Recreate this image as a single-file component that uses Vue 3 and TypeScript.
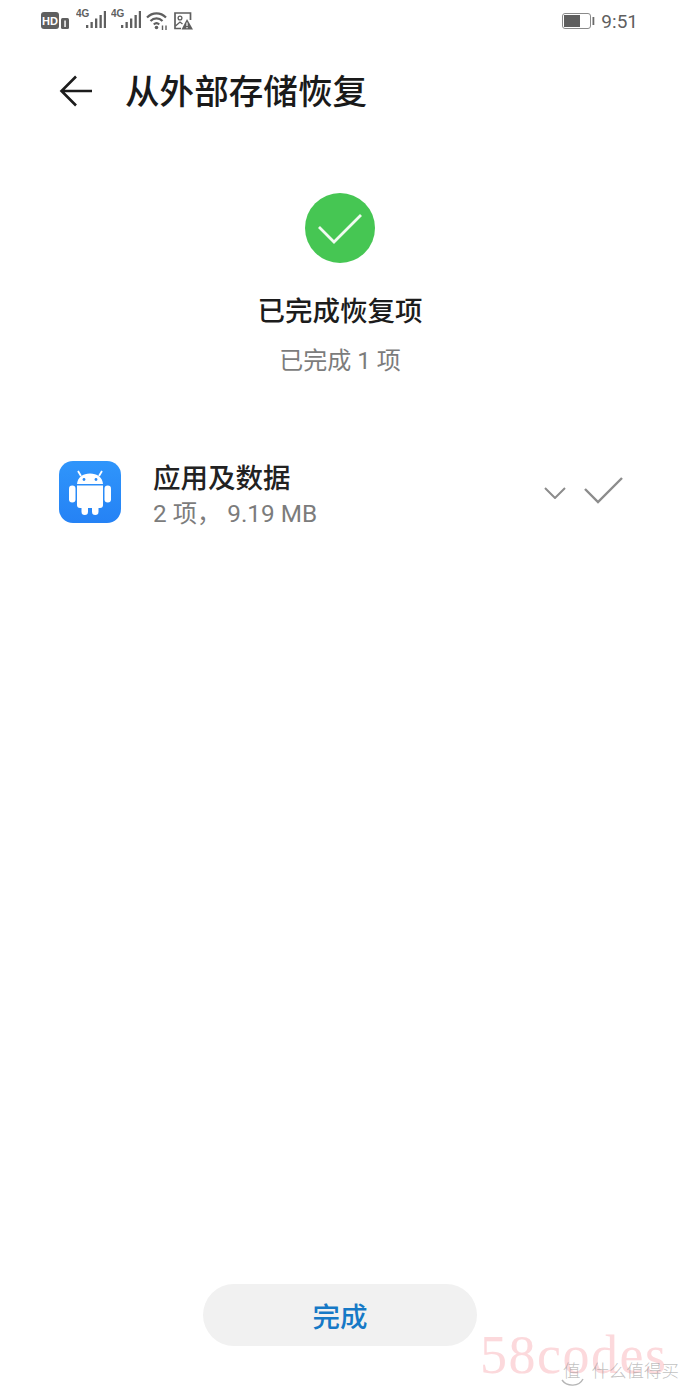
<script setup lang="ts">
const bars = [
  { x: 10, y: 17, h: 3 },
  { x: 14.5, y: 14, h: 6 },
  { x: 19, y: 10.5, h: 9.5 },
  { x: 23.5, y: 7, h: 13 },
  { x: 27.8, y: 3, h: 17 },
]
</script>

<template>
  <div class="page">
    <!-- Status bar -->
    <div class="status">
      <div class="status-left">
        <svg class="ico-hd" width="29" height="18" viewBox="0 0 29 18">
          <rect x="0" y="0" width="18" height="17" rx="3" fill="#5f5f5f" />
          <text x="9" y="13" text-anchor="middle" class="hd-text">HD</text>
          <rect x="20" y="6" width="8" height="11" rx="1.500" fill="#5f5f5f" />
          <rect x="23.300" y="8.500" width="1.500" height="6.500" fill="#fff" />
        </svg>
        <svg v-for="n in 2" :key="n" class="ico-sig" width="30" height="22" viewBox="0 0 30 22">
          <text x="0" y="9" class="g-text">4G</text>
          <rect v-for="b in bars" :key="b.x" :x="b.x" :y="b.y" width="2.300" :height="b.h" fill="#5f5f5f" />
        </svg>
        <svg class="ico-wifi" width="23" height="20" viewBox="0 0 23 20" fill="none" stroke="#5f5f5f" stroke-width="2.200">
          <path d="M1 6.500C6.500 1 14.500 1 20 6.500" />
          <path d="M4.500 10C8 6.500 13 6.500 16.500 10" />
          <path d="M7.800 13.500C9.500 11.800 11.500 11.800 13.200 13.500" />
          <circle cx="10.500" cy="16.500" r="1.800" fill="#5f5f5f" stroke="none" />
          <path d="M16.500 14.500v4.500M20 14.500v4.500" stroke-width="1.400" />
        </svg>
        <svg class="ico-pic" width="19" height="18" viewBox="0 0 19 18" fill="none">
          <path d="M7 16.500H1V1h15.500v7" stroke="#5f5f5f" stroke-width="1.700" />
          <circle cx="6" cy="6" r="1.900" stroke="#5f5f5f" stroke-width="1.300" />
          <path d="M1.500 14l4.500-4 2.500 2" stroke="#5f5f5f" stroke-width="1.300" />
          <path d="M13 7L19 17.500H7.500z" fill="#5f5f5f" />
          <path d="M13 10.500v3.500M13 15v1.300" stroke="#fff" stroke-width="1.200" />
        </svg>
      </div>
      <div class="status-right">
        <svg width="33" height="16" viewBox="0 0 33 16" fill="none">
          <rect x="0.500" y="0.500" width="28" height="15" rx="2.500" stroke="#8a8a8a" />
          <rect x="2" y="2" width="16" height="12" fill="#5f5f5f" />
          <rect x="30.500" y="4" width="1.800" height="8" fill="#6a6a6a" />
        </svg>
        <span class="clock">9:51</span>
      </div>
    </div>

    <!-- Title bar -->
    <header class="titlebar">
      <svg class="back" width="34" height="32" viewBox="0 0 34 32" fill="none" stroke="#1c1c1c" stroke-width="2.600">
        <path d="M33 16H2.500M17 1.500L2.500 16L17 30.500" />
      </svg>
      <h1 class="title">从外部存储恢复</h1>
    </header>

    <!-- Result -->
    <section class="result">
      <div class="ok-circle">
        <svg width="70" height="70" viewBox="0 0 70 70" fill="none" stroke="#f1fbf1" stroke-width="2.800">
          <path d="M14 34L29 49L56 22" />
        </svg>
      </div>
      <div class="result-title">已完成恢复项</div>
      <div class="result-sub">已完成 1 项</div>
    </section>

    <!-- Row -->
    <section class="row">
      <div class="app-icon">
        <svg width="42" height="46" viewBox="0 0 42 46" fill="#fff">
          <path d="M8 15C8.500 8.500 14 4.500 21 4.500S33.500 8.500 34 15z" />
          <path d="M12 7L9 2M30 7l3-5" stroke="#fff" stroke-width="1.800" />
          <path d="M8 16.500H34V36a3 3 0 0 1-3 3H11a3 3 0 0 1-3-3z" />
          <rect x="0" y="16.500" width="6.500" height="17" rx="3.250" />
          <rect x="35.500" y="16.500" width="6.500" height="17" rx="3.250" />
          <rect x="12.500" y="33" width="6.500" height="13" rx="3.250" />
          <rect x="23" y="33" width="6.500" height="13" rx="3.250" />
          <circle cx="15" cy="10.500" r="1.400" fill="#2b8bf8" />
          <circle cx="27" cy="10.500" r="1.400" fill="#2b8bf8" />
        </svg>
      </div>
      <div class="row-text">
        <div class="row-title">应用及数据</div>
        <div class="row-sub">2 项， 9.19 MB</div>
      </div>
      <svg class="chev" width="22" height="12" viewBox="0 0 22 12" fill="none" stroke="#8c8c8c" stroke-width="2">
        <path d="M1 1L11 11L21 1" />
      </svg>
      <svg class="tick" width="39" height="27" viewBox="0 0 39 27" fill="none" stroke="#8c8c8c" stroke-width="2.400">
        <path d="M1 12L14 25L38 1" />
      </svg>
    </section>

    <div class="spacer"></div>

    <!-- Bottom button -->
    <footer class="foot">
      <button class="done" type="button">完成</button>
    </footer>

    <!-- Watermarks over the page -->
    <div class="wm-site">58codes</div>
    <svg class="wm-ring" width="30" height="34" viewBox="0 0 30 34" fill="none" stroke="#b5b5b5" stroke-width="1.400">
      <path d="M5 26C10 33 22 33 26 25" />
    </svg>
    <div class="wm-zhi"><span class="wm-mark">值</span>什么值得买</div>
  </div>
</template>

<style scoped>
.page {
  position: relative;
  width: 680px;
  height: 1388px;
  display: flex;
  flex-direction: column;
  overflow: hidden;
  background: #fff;
  font-family: Roboto, "Noto Sans CJK SC", sans-serif;
}

.status {
  height: 42px;
  padding: 0 42px 0 41px;
  display: flex;
  align-items: center;
  justify-content: space-between;
  box-sizing: border-box;
}
.status-left { display: flex; align-items: center; gap: 5px; }
.status-right { display: flex; align-items: center; gap: 6px; }
.hd-text { font: 700 11px "Liberation Sans", sans-serif; fill: #fff; }
.g-text { font: 700 10px "Liberation Sans", sans-serif; fill: #5f5f5f; }
.ico-hd { margin-right: 1px; }
.ico-sig { margin-top: -4px; }
.clock {
  font: 400 19px Roboto, sans-serif;
  color: #5f5f5f;
}

.titlebar {
  height: 98px;
  padding: 0 0 4px 59px;
  display: flex;
  align-items: center;
  gap: 32px;
  box-sizing: border-box;
}
.back { margin-top: 4px; }
.title {
  margin: 0;
  font-size: 34.600px;
  font-weight: 500;
  color: #1a1a1a;
}

.result {
  padding-top: 53px;
  display: flex;
  flex-direction: column;
  align-items: center;
}
.ok-circle {
  width: 70px;
  height: 70px;
  border-radius: 50%;
  background: #46c653;
}
.result-title {
  margin-top: 29px;
  font-size: 27.500px;
  line-height: 40px;
  font-weight: 500;
  color: #1c1c1c;
}
.result-sub {
  margin-top: 10px;
  font-size: 24px;
  line-height: 38px;
  color: #7c7c7c;
}

.row {
  margin-top: 67px;
  padding: 0 57px 0 59px;
  height: 90px;
  display: flex;
  align-items: center;
}
.app-icon {
  width: 62px;
  height: 62px;
  border-radius: 14px;
  background: linear-gradient(#2f95fb, #2582f5);
  display: flex;
  align-items: center;
  justify-content: center;
  margin-right: 32px;
}
.row-text { flex: 1; padding-top: 7px; }
.row-title {
  font-size: 27.500px;
  line-height: 36px;
  font-weight: 500;
  color: #222;
}
.row-sub {
  font-size: 24.300px;
  line-height: 34px;
  color: #7c7c7c;
}
.chev { margin-right: 18px; margin-top: 2px; }
.tick { margin-top: -4px; }

.spacer { flex: 1; }

.foot {
  display: flex;
  justify-content: center;
  padding-bottom: 42px;
}
.done {
  width: 274px;
  height: 62px;
  border: 0;
  border-radius: 31px;
  background: #f1f1f1;
  color: #1679c6;
  font-family: inherit;
  font-size: 27.500px;
  font-weight: 500;
}

.wm-site {
  position: absolute;
  left: 480px;
  top: 1325px;
  font: 400 54px/60px "Liberation Serif", serif;
  letter-spacing: 1.500px;
  color: #fcd9dc;
}
.wm-ring {
  position: absolute;
  left: 557px;
  top: 1354px;
}
.wm-zhi {
  position: absolute;
  left: 563px;
  top: 1358px;
  font-size: 17.500px;
  line-height: 26px;
  font-weight: 300;
  color: rgba(130, 130, 130, .5);
  white-space: nowrap;
}
.wm-mark { margin-right: 11px; }
</style>
